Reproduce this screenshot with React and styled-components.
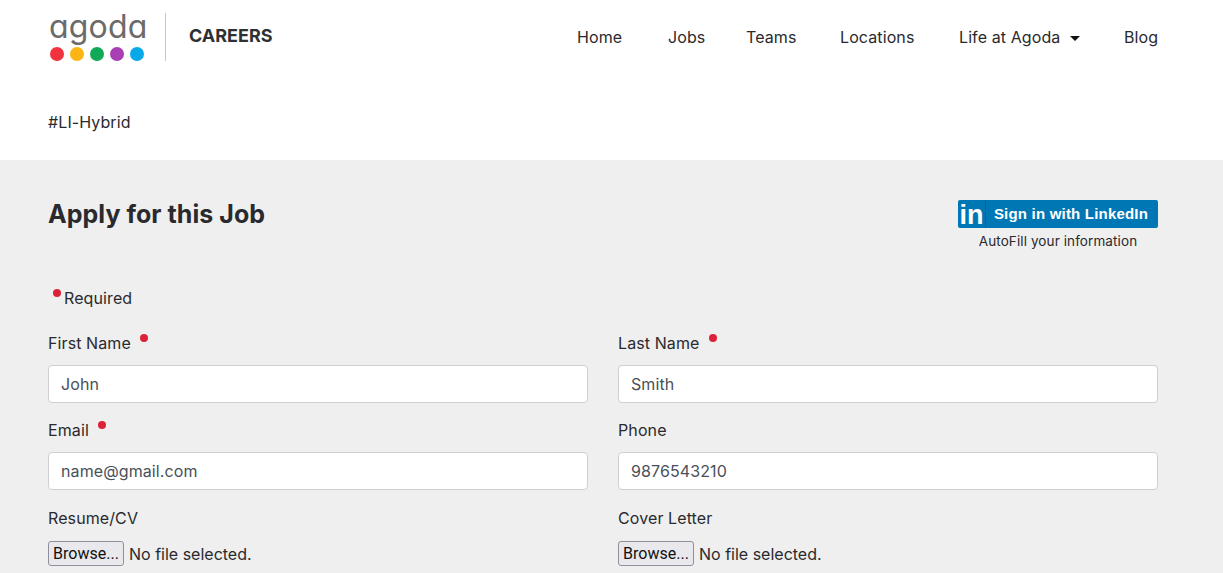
import styled, { createGlobalStyle } from "styled-components"

const GlobalStyle = createGlobalStyle`
    html, body {
        margin: 0;
        height: 100%;
        overflow: hidden;
        background: #fff;
    }
    body {
        font-family: "Inter", "Liberation Sans", sans-serif;
        letter-spacing: 0.1px;
        color: #2a2a2e;
    }
`

const Header = styled.header`
    height: 160px;
    padding: 0 66px 0 48px;
    background: #fff;
`

const TopBar = styled.div`
    height: 75px;
    display: flex;
    justify-content: space-between;
    align-items: flex-start;
`

const Brand = styled.div`
    display: flex;
    align-items: flex-start;
    padding-top: 13px;
`

const LogoMark = styled.div`
    width: 100px;
    margin-left: 2px;
    display: flex;
    flex-direction: column;
    align-items: flex-start;
`

const LogoWord = styled.span`
    display: block;
    height: 34px;
    margin-left: -1px;
    font-weight: 400;
    font-size: 32px;
    font-feature-settings: "cv11";
    line-height: 27px;
    letter-spacing: 0.2px;
    color: #6b6b6b;
`

const Dots = styled.div`
    display: flex;
    gap: 6px;
`

const Dot = styled.span`
    width: 14px;
    height: 14px;
    border-radius: 50%;
    background: ${({ $color }) => $color};
`

const Divider = styled.div`
    width: 1px;
    height: 48px;
    margin: 0 23px 0 15px;
    background: #c8c8c8;
`

const BrandTitle = styled.div`
    font-size: 18px;
    font-weight: 700;
    line-height: 22px;
    margin-top: 12px;
    letter-spacing: 0;
    color: #2f3033;
`

const Nav = styled.nav`
    display: flex;
    gap: 44px;
    padding-top: 27px;
`

const NavLink = styled.a`
    width: ${({ $width }) => $width}px;
    display: flex;
    align-items: center;
    white-space: nowrap;
    font-size: 16px;
    line-height: 20px;
    color: #2a2a2e;
`

const Caret = styled.span`
    margin-left: 10px;
    margin-top: 3px;
    border-top: 5px solid #111;
    border-left: 5.5px solid transparent;
    border-right: 5.5px solid transparent;
`

const Tag = styled.p`
    margin: 37px 0 0;
    font-size: 16px;
    line-height: 20px;
`

const ApplySection = styled.section`
    height: 413px;
    padding: 0 65px 0 48px;
    background: #efefef;
`

const ApplyHead = styled.div`
    display: flex;
    justify-content: space-between;
    align-items: flex-start;
    padding-top: 39px;
`

const ApplyTitle = styled.h2`
    margin: 0;
    font-size: 25px;
    font-weight: 700;
    line-height: 30px;
    letter-spacing: 0.05px;
    color: #2a2a2e;
`

const LinkedInBox = styled.div`
    width: 200px;
    display: flex;
    flex-direction: column;
    align-items: center;
    margin-top: 1px;
`

const LinkedInButton = styled.button`
    width: 200px;
    height: 28px;
    padding: 0;
    display: flex;
    align-items: stretch;
    border: 0;
    border-radius: 2px;
    background: #0077b5;
    color: #fff;
    font-family: "Liberation Sans", Arial, sans-serif;
    font-weight: 700;
`

const LinkedInIcon = styled.span`
    width: 28px;
    flex: none;
    box-sizing: border-box;
    display: flex;
    align-items: center;
    justify-content: center;
    padding-top: 2px;
    border-right: 1px solid #00659b;
    font-size: 27px;
    line-height: 26px;
`

const LinkedInLabel = styled.span`
    flex: 1;
    padding-right: 2px;
    font-size: 15px;
    line-height: 28px;
    text-align: center;
    letter-spacing: 0.2px;
`

const AutoFill = styled.div`
    margin-top: 5px;
    font-size: 13.5px;
    line-height: 17px;
`

const Required = styled.div`
    margin-top: 38px;
    padding-left: 5px;
    font-size: 16px;
    line-height: 20px;
`

const Mark = styled.span`
    display: inline-block;
    width: 8px;
    height: 8px;
    margin-left: ${({ $gap }) => $gap || 0}px;
    margin-right: ${({ $after }) => $after || 0}px;
    border-radius: 50%;
    background: #dc2238;
    vertical-align: 7px;
`

const FormGrid = styled.form`
    display: grid;
    grid-template-columns: 540px 540px;
    column-gap: 30px;
    margin-top: 25px;
`

const Field = styled.div`
    height: 87px;
`

const Label = styled.label`
    display: block;
    height: 32px;
    font-size: 16px;
    line-height: 20px;
`

const FileLabel = styled(Label)`
    height: 33px;
    padding-top: 1px;
    box-sizing: border-box;
`

const TextInput = styled.input`
    display: block;
    box-sizing: border-box;
    width: 100%;
    height: 38px;
    padding: 0 12px;
    border: 1px solid #cfcfcf;
    border-radius: 4px;
    background: #fff;
    font-family: inherit;
    font-size: 16px;
    letter-spacing: 0.1px;
    color: #495057;
`

const FileRow = styled.div`
    display: flex;
    align-items: center;
    gap: 5px;
    font-size: 16px;
    letter-spacing: 0;
    margin-top: 1px;
`

const BrowseButton = styled.button`
    width: 76px;
    height: 25px;
    padding: 0;
    border: 1px solid #8f8f9d;
    border-radius: 3px;
    background: #e9e9ed;
    font-family: "Roboto", sans-serif;
    font-size: 16px;
    color: #111;
`

const colors = ["#f1323f", "#fdb515", "#0fa958", "#a93fb4", "#08a9e6"]

const navItems = [
    { label: "Home", width: 47 },
    { label: "Jobs", width: 34 },
    { label: "Teams", width: 50 },
    { label: "Locations", width: 75 },
]

const fields = [
    { label: "First Name", value: "John", required: true },
    { label: "Last Name", value: "Smith", required: true },
    { label: "Email", value: "name@gmail.com", required: true },
    { label: "Phone", value: "9876543210" },
]

const App = () => (
    <>
        <GlobalStyle />
        <Header>
            <TopBar>
                <Brand>
                    <LogoMark>
                        <LogoWord>agoda</LogoWord>
                        <Dots>
                            {colors.map((c) => <Dot key={c} $color={c} />)}
                        </Dots>
                    </LogoMark>
                    <Divider />
                    <BrandTitle>CAREERS</BrandTitle>
                </Brand>
                <Nav>
                    {navItems.map((item) => (
                        <NavLink key={item.label} $width={item.width}>{item.label}</NavLink>
                    ))}
                    <NavLink $width={121}>Life at Agoda<Caret /></NavLink>
                    <NavLink $width={33}>Blog</NavLink>
                </Nav>
            </TopBar>
            <Tag>#LI-Hybrid</Tag>
        </Header>
        <ApplySection>
            <ApplyHead>
                <ApplyTitle>Apply for this Job</ApplyTitle>
                <LinkedInBox>
                    <LinkedInButton type="button">
                        <LinkedInIcon>in</LinkedInIcon>
                        <LinkedInLabel>Sign in with LinkedIn</LinkedInLabel>
                    </LinkedInButton>
                    <AutoFill>AutoFill your information</AutoFill>
                </LinkedInBox>
            </ApplyHead>
            <Required><Mark $after={3} />Required</Required>
            <FormGrid>
                {fields.map((f) => (
                    <Field key={f.label}>
                        <Label>{f.label}{f.required && <Mark $gap={9} />}</Label>
                        <TextInput defaultValue={f.value} />
                    </Field>
                ))}
                {["Resume/CV", "Cover Letter"].map((label) => (
                    <Field key={label}>
                        <FileLabel>{label}</FileLabel>
                        <FileRow>
                            <BrowseButton type="button">Browse...</BrowseButton>
                            <span>No file selected.</span>
                        </FileRow>
                    </Field>
                ))}
            </FormGrid>
        </ApplySection>
    </>
)

export default App
